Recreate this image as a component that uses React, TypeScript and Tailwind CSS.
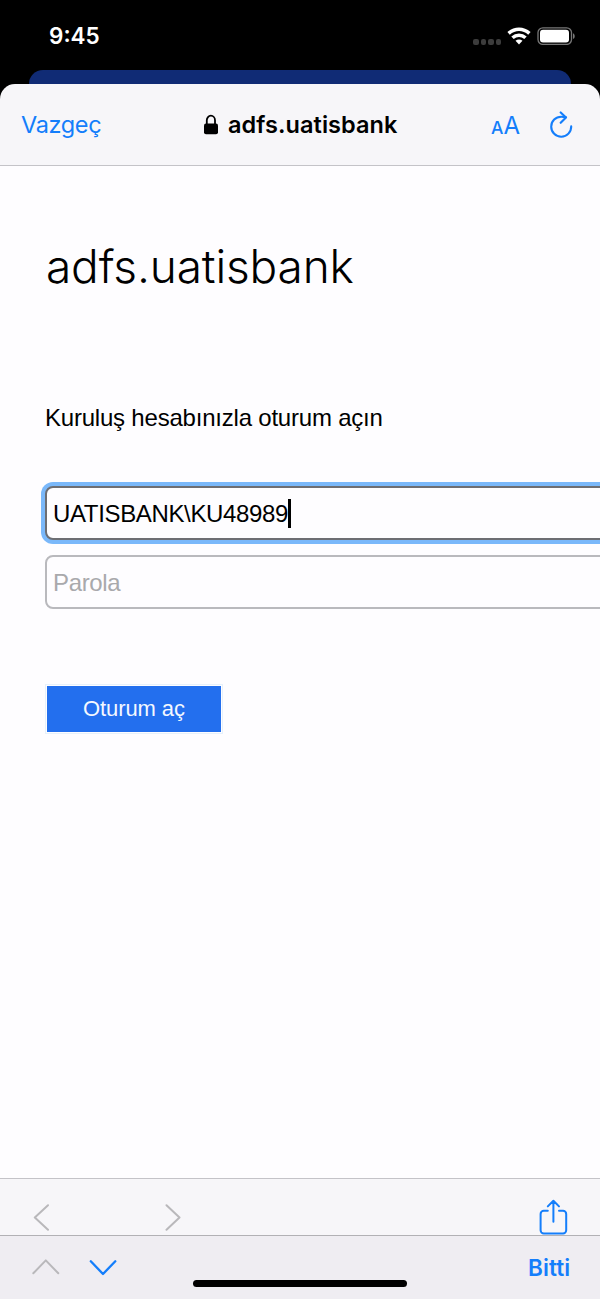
function StatusBar() {
  return (
    <div className="flex h-[70px] items-start text-white">
      <span className="mt-[22px] ml-[49px] w-[424px] font-['Inter',sans-serif] text-[22.5px] leading-7 font-semibold">9:45</span>
      <div className="mt-[39px] flex gap-[2px]">
        <span className="size-[5.5px] rounded-[2px] bg-[#3c3c3c]" />
        <span className="size-[5.5px] rounded-[2px] bg-[#3c3c3c]" />
        <span className="size-[5.5px] rounded-[2px] bg-[#3c3c3c]" />
        <span className="size-[5.5px] rounded-[2px] bg-[#3c3c3c]" />
      </div>
      <svg className="mt-[27px] ml-[6px] shrink-0" width="24" height="18" viewBox="0 0 24 18" fill="none" stroke="white" strokeWidth="3.6">
        <path d="M1.6 6.4C7.8.9 16.2.9 22.4 6.4" />
        <path d="M5.5 10.8c3.8-3.5 9.2-3.5 13 0" />
        <path d="M12 17.4l-3.5-3.6c2-1.7 5-1.7 7 0z" fill="white" stroke="none" />
      </svg>
      <svg className="mt-[27px] ml-[6px] shrink-0" width="39" height="18" viewBox="0 0 39 18" fill="none">
        <rect x="1" y=".8" width="33.5" height="16.6" rx="4.8" stroke="#777" strokeWidth="1.3" />
        <rect x="3" y="2.8" width="29" height="12.6" rx="3" fill="white" />
        <path d="M36 6.2c2.3 1.2 2.3 4.7 0 5.9z" fill="#777" />
      </svg>
    </div>
  );
}

function BrowserHeader() {
  return (
    <header className="flex h-[82px] items-start rounded-t-[15px] border-b border-[#c4c3c8] bg-[#f7f6f9] font-['Inter',sans-serif]">
      <button className="mt-[27px] ml-[21px] w-[182px] text-left text-[23.5px] leading-7 tracking-[-0.35px] text-[#147efb]">Vazgeç</button>
      <svg className="mt-[30px] shrink-0" width="16" height="22" viewBox="0 0 16 22">
        <rect x="1" y="9.5" width="14" height="10.7" rx="2" fill="black" />
        <path d="M3.8 10V6.3a4.1 4.6 0 018.2 0V10" fill="none" stroke="black" strokeWidth="1.8" />
      </svg>
      <span className="mt-[27px] ml-[9px] w-[263px] text-[23.5px] leading-7 font-semibold tracking-[0.06px] text-black">adfs.uatisbank</span>
      <button className="mt-[28px] flex w-[58px] items-baseline text-[#147efb]">
        <span className="text-[17.5px] leading-7 font-medium">A</span>
        <span className="text-[24px] leading-7 tracking-[-0.5px]">A</span>
      </button>
      <svg className="mt-[27px] shrink-0" width="26" height="28" viewBox="0 0 26 28" fill="none" stroke="#147efb" strokeWidth="2.1" strokeLinecap="round" strokeLinejoin="round">
        <path d="M22.2 15.4A10 10 0 1112.3 5.7c1.6 0 3 .2 4.6.6" />
        <path d="M11.7 1.4l5.3 5-5.3 5.4" />
      </svg>
    </header>
  );
}

function SignIn() {
  return (
    <main className="flex h-[1012px] flex-col overflow-hidden bg-[#fefdff] pl-[45px] font-['Liberation_Sans',sans-serif] text-black">
      <h1 className="mt-[70px] h-[60px] pl-px font-['Inter',sans-serif] text-[46px] leading-[60px] font-light tracking-[-0.15px] whitespace-nowrap">adfs.uatisbank</h1>
      <p className="mt-[108px] h-[28px] text-[24px] leading-7 tracking-[-0.21px] whitespace-nowrap">Kuruluş hesabınızla oturum açın</p>
      <div className="mt-[54px] flex h-[54px] w-[620px] shrink-0 items-center rounded-[8px] border-2 border-[#6d6e73] bg-[#fefdff] pt-[2px] pl-[6px] ring-4 ring-[#7ab8fa]">
        <span className="text-[24px] leading-7 tracking-[-0.35px] whitespace-nowrap">UATISBANK\KU48989</span>
        <span className="mb-[2px] h-[29px] w-[2.5px] bg-black" />
      </div>
      <div className="mt-[15px] flex h-[54px] w-[620px] shrink-0 items-center rounded-[8px] border-2 border-[#b9b9bd] pt-[2px] pl-[6px]">
        <span className="text-[24px] leading-7 tracking-[-0.35px] text-[#a9a9ac]">Parola</span>
      </div>
      <button className="mt-[75px] flex h-[50px] w-[178px] shrink-0 border border-[#e6f1fb] p-px">
        <span className="flex h-[46px] w-[174px] items-center justify-center bg-[#236fee] text-[22px] leading-7 tracking-[-0.1px] text-[#f4f8ff]">Oturum aç</span>
      </button>
    </main>
  );
}

function BottomBars() {
  return (
    <footer>
      <div className="flex h-[57px] items-start border-t border-[#c4c3c8] bg-[#f7f6f9]">
        <svg className="mt-[25px] ml-[33px] shrink-0" width="18" height="28" viewBox="0 0 18 28" fill="none" stroke="#b9b8bb" strokeWidth="2" strokeLinecap="round" strokeLinejoin="round"><path d="M15 1.3L1.8 13.5 15 25.7" /></svg>
        <svg className="mt-[25px] ml-[113px] shrink-0" width="18" height="28" viewBox="0 0 18 28" fill="none" stroke="#b9b8bb" strokeWidth="2" strokeLinecap="round" strokeLinejoin="round"><path d="M2.5 1.3L15.5 13.5 2.5 25.7" /></svg>
        <svg className="mt-[20px] ml-[356px] shrink-0" width="30" height="36" viewBox="0 0 30 36" fill="none" stroke="#147efb" strokeWidth="2" strokeLinecap="round" strokeLinejoin="round">
          <path d="M9.8 11.8H5.8a3.2 3.2 0 00-3.2 3.2v16.3a3.2 3.2 0 003.2 3.2h19.2a3.2 3.2 0 003.2-3.2V15a3.2 3.2 0 00-3.2-3.2h-4M15.4 22.7V2M9.8 7.4L15.4 1.7l5.6 5.7" />
        </svg>
      </div>
      <div className="flex h-[64px] items-start border-t border-[#b2b1b5] bg-[#efedf2]">
        <svg className="mt-[23px] ml-[32px] shrink-0" width="28" height="17" viewBox="0 0 28 17" fill="none" stroke="#b9b8bb" strokeWidth="2" strokeLinecap="round" strokeLinejoin="round"><path d="M1.3 14.3L13.8 1.4l12.5 12.9" /></svg>
        <svg className="mt-[23px] ml-[29px] shrink-0" width="28" height="17" viewBox="0 0 28 17" fill="none" stroke="#147efb" strokeWidth="2.3" strokeLinecap="round" strokeLinejoin="round"><path d="M1.8 2.3L14 15 26.3 2.3" /></svg>
        <span className="mt-[44px] ml-[76px] h-[7px] w-[214px] rounded-full bg-black" />
        <button className="mt-[18px] ml-[121px] font-['Inter',sans-serif] text-[22.5px] leading-7 font-semibold tracking-[0.1px] text-[#147efb]">Bitti</button>
      </div>
    </footer>
  );
}

export default function App() {
  return (
    <div className="h-[1299px] w-[600px] overflow-hidden bg-black">
      <StatusBar />
      <div className="mx-[29px] h-[14px] rounded-t-[14px] bg-[#102b75]" />
      <BrowserHeader />
      <SignIn />
      <BottomBars />
    </div>
  );
}
